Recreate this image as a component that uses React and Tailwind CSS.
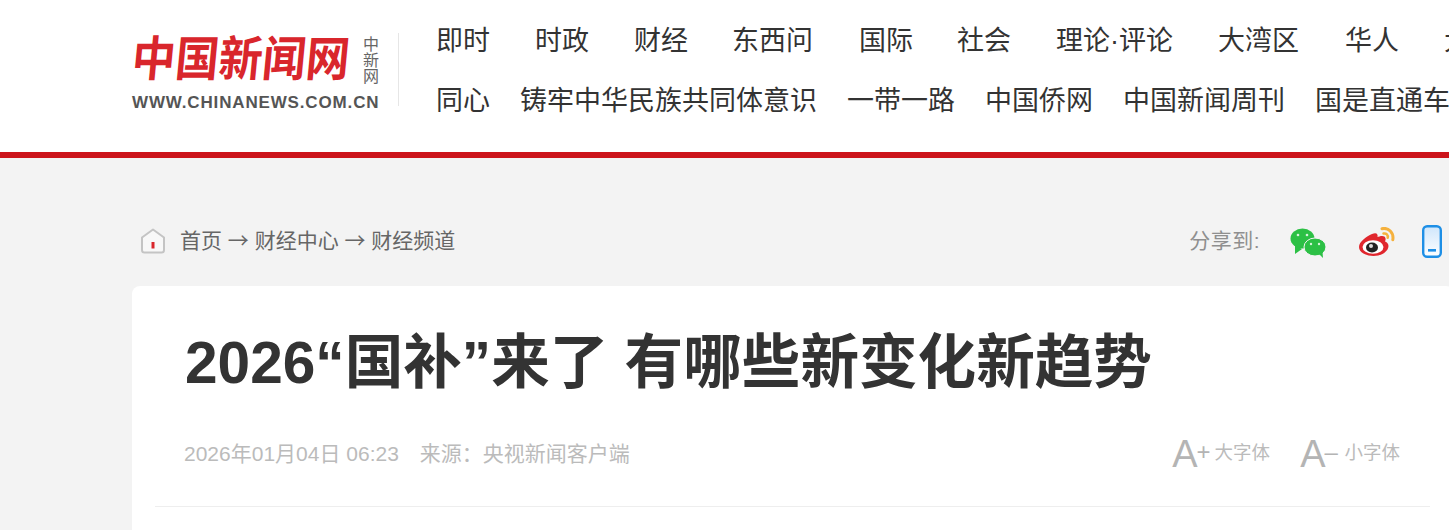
const font = { fontFamily: '"Liberation Sans", "Noto Sans CJK SC", sans-serif' };

const row1 = [
  ['即时', 'w-[99px]'], ['时政', 'w-[99px]'], ['财经', 'w-[98px]'], ['东西问', 'w-[127px]'], ['国际', 'w-[98px]'],
  ['社会', 'w-[99px]'], ['理论·评论', 'w-[162px]'], ['大湾区', 'w-[127px]'], ['华人', 'w-[99px]'], ['大健康', 'w-[127px]'],
];
const row2 = ['同心', '铸牢中华民族共同体意识', '一带一路', '中国侨网', '中国新闻周刊', '国是直通车'];

function Logo() {
  return (
    <div className="w-[248px] shrink-0">
      <div className="flex items-start justify-between">
        <div className="text-[43.500px] leading-[52px] font-bold text-[#d9262c] -skew-x-6 scale-y-110 whitespace-nowrap">中国新闻网</div>
        <div className="w-[17px] mt-[4px] text-[16px] leading-[16px] text-[#666]">中新网</div>
      </div>
      <div className="mt-[10px] text-[17px] leading-[16px] font-bold text-[#555] tracking-[0.85px] whitespace-nowrap">WWW.CHINANEWS.COM.CN</div>
    </div>
  );
}

function HomeIcon() {
  return (
    <svg width="26" height="26" viewBox="0 0 26 26" fill="none">
      <path d="M2 9.500 13 1.500l11 8v12.500a2.500 2.500 0 0 1-2.500 2.500h-17A2.500 2.500 0 0 1 2 22z" fill="#f8f8f8" stroke="#c4c4c4" strokeWidth="2" strokeLinejoin="round" />
      <rect x="11.500" y="14" width="3" height="6.500" fill="#d9262c" />
    </svg>
  );
}

function WechatIcon() {
  return (
    <svg width="36" height="30" viewBox="0 0 36 30">
      <ellipse cx="12.500" cy="10.500" rx="12" ry="10" fill="#2cc045" />
      <path d="M5 17l0 9 7-5z" fill="#2cc045" />
      <ellipse cx="25" cy="19" rx="11" ry="9" fill="#2cc045" stroke="#f3f3f3" strokeWidth="1" />
      <path d="M29 26l4 4-.5-6z" fill="#2cc045" />
      <circle cx="8" cy="7" r="1.300" fill="#d8f2dc" />
      <circle cx="17" cy="7" r="1.300" fill="#d8f2dc" />
      <circle cx="21" cy="16" r="1.200" fill="#d8f2dc" />
      <circle cx="29" cy="16" r="1.200" fill="#d8f2dc" />
    </svg>
  );
}

function WeiboIcon() {
  return (
    <svg width="36" height="29" viewBox="0 0 36 29" fill="none">
      <path d="M13 7C7.500 9.500 0 14.500 0 20c0 5.500 7 9 14.500 9C23 29 29.500 24 29.500 19c0-2.500-2-4-3.500-4.500 1-2 .8-4-.6-5-1.900-1.200-5.400-.2-6.900.6.600-2.600-.5-4.900-5.500-3.100z" fill="#e0262d" />
      <ellipse cx="14" cy="20" rx="10.500" ry="6.800" fill="#fff" />
      <ellipse cx="13" cy="20.500" rx="6" ry="5" fill="#222" />
      <circle cx="12" cy="19" r="2" fill="#ddd" />
      <path d="M23 1.700c6.500-1.500 12 4 10.800 11" stroke="#f5b13d" strokeWidth="3" strokeLinecap="round" />
      <path d="M24.500 6.500c2.800-.6 4.800 1.400 4.200 4.200" stroke="#f5b13d" strokeWidth="2.500" strokeLinecap="round" />
    </svg>
  );
}

function PhoneIcon() {
  return (
    <svg width="20" height="33" viewBox="0 0 20 33" fill="none">
      <defs>
        <linearGradient id="phoneFill" x1="0" y1="0" x2="0" y2="1">
          <stop offset="0" stopColor="#cfe6fb" />
          <stop offset="1" stopColor="#ffffff" />
        </linearGradient>
      </defs>
      <rect x="1.200" y="1.200" width="17.600" height="30.600" rx="4" fill="url(#phoneFill)" stroke="#1e8fe6" strokeWidth="2.400" />
      <rect x="6" y="24" width="8" height="2.600" fill="#1e8fe6" />
    </svg>
  );
}

function FontSize({ sign, label, signWidth, className }) {
  return (
    <div className={`flex items-center text-[#b4b4b4] ${className}`}>
      <span className="text-[38px] leading-[38px]">A</span>
      <span className={`text-[24px] leading-[24px] -ml-[1px] -mt-[4px] ${signWidth}`}>{sign}</span>
      <span className="text-[18.500px] text-[#bbb] -mt-[2px]">{label}</span>
    </div>
  );
}

function Arrow() {
  return <span className="font-['Noto_Sans_CJK_SC']">→</span>;
}

export default function App() {
  return (
    <div className="w-full h-[530px] overflow-hidden bg-[#f3f3f3]" style={font}>
      <header className="h-[152px] bg-white flex items-start pl-[132px] overflow-hidden">
        <div className="pt-[33px]"><Logo /></div>
        <div className="w-px h-[73px] mt-[33px] ml-[18px] bg-[#e6e6e6] shrink-0" />
        <nav className="pl-[37px] pt-[11px] text-[27px] leading-[60px] text-[#333] whitespace-nowrap">
          <div className="flex">
            {row1.map(([t, w]) => <span key={t} className={`${w} shrink-0`}>{t}</span>)}
          </div>
          <div className="flex gap-[30px]">
            {row2.map((t) => <span key={t}>{t}</span>)}
          </div>
        </nav>
      </header>
      <div className="h-[6px] bg-[#cc141b]" />

      <div className="w-[1322px] ml-[132px]">
        <div className="h-[128px] flex items-center justify-between pl-[8px] pr-[12px] pt-[52px] pb-[14px]">
          <div className="flex items-center text-[21px] text-[#666]">
            <HomeIcon />
            <span className="ml-[14px] -mt-[2px] whitespace-nowrap">首页 <Arrow /> 财经中心 <Arrow /> 财经频道</span>
          </div>
          <div className="flex items-center">
            <span className="text-[21px] text-[#8f8f8f] mr-[30px] tracking-[0.5px]">分享到:</span>
            <span className="mt-[4px]"><WechatIcon /></span>
            <span className="w-[33px]" />
            <WeiboIcon />
            <span className="w-[27px]" />
            <PhoneIcon />
          </div>
        </div>

        <main className="bg-white rounded-t-[8px] h-[300px] pl-[23px] pr-[24px]">
          <h1 className="pt-[43px] pl-[30px] text-[58.600px] leading-[68px] font-bold text-[#333] whitespace-nowrap">2026“国补”来了 有哪些新变化新趋势</h1>
          <div className="mt-[41px] pl-[29px] pr-[30px] h-[68px] flex items-start justify-between">
            <div className="text-[21px] leading-[32px] text-[#bbb]">
              <span>2026年01月04日 06:23</span>
              <span className="ml-[21px]">{'来源\uFF1A央视新闻客户端'}</span>
            </div>
            <div className="flex -mt-[3px]">
              <FontSize sign="+" label="大字体" signWidth="w-[18px]" className="mr-[30px]" />
              <FontSize sign="–" label="小字体" signWidth="w-[20px]" />
            </div>
          </div>
          <div className="h-px bg-[#eee]" />
        </main>
      </div>
    </div>
  );
}
